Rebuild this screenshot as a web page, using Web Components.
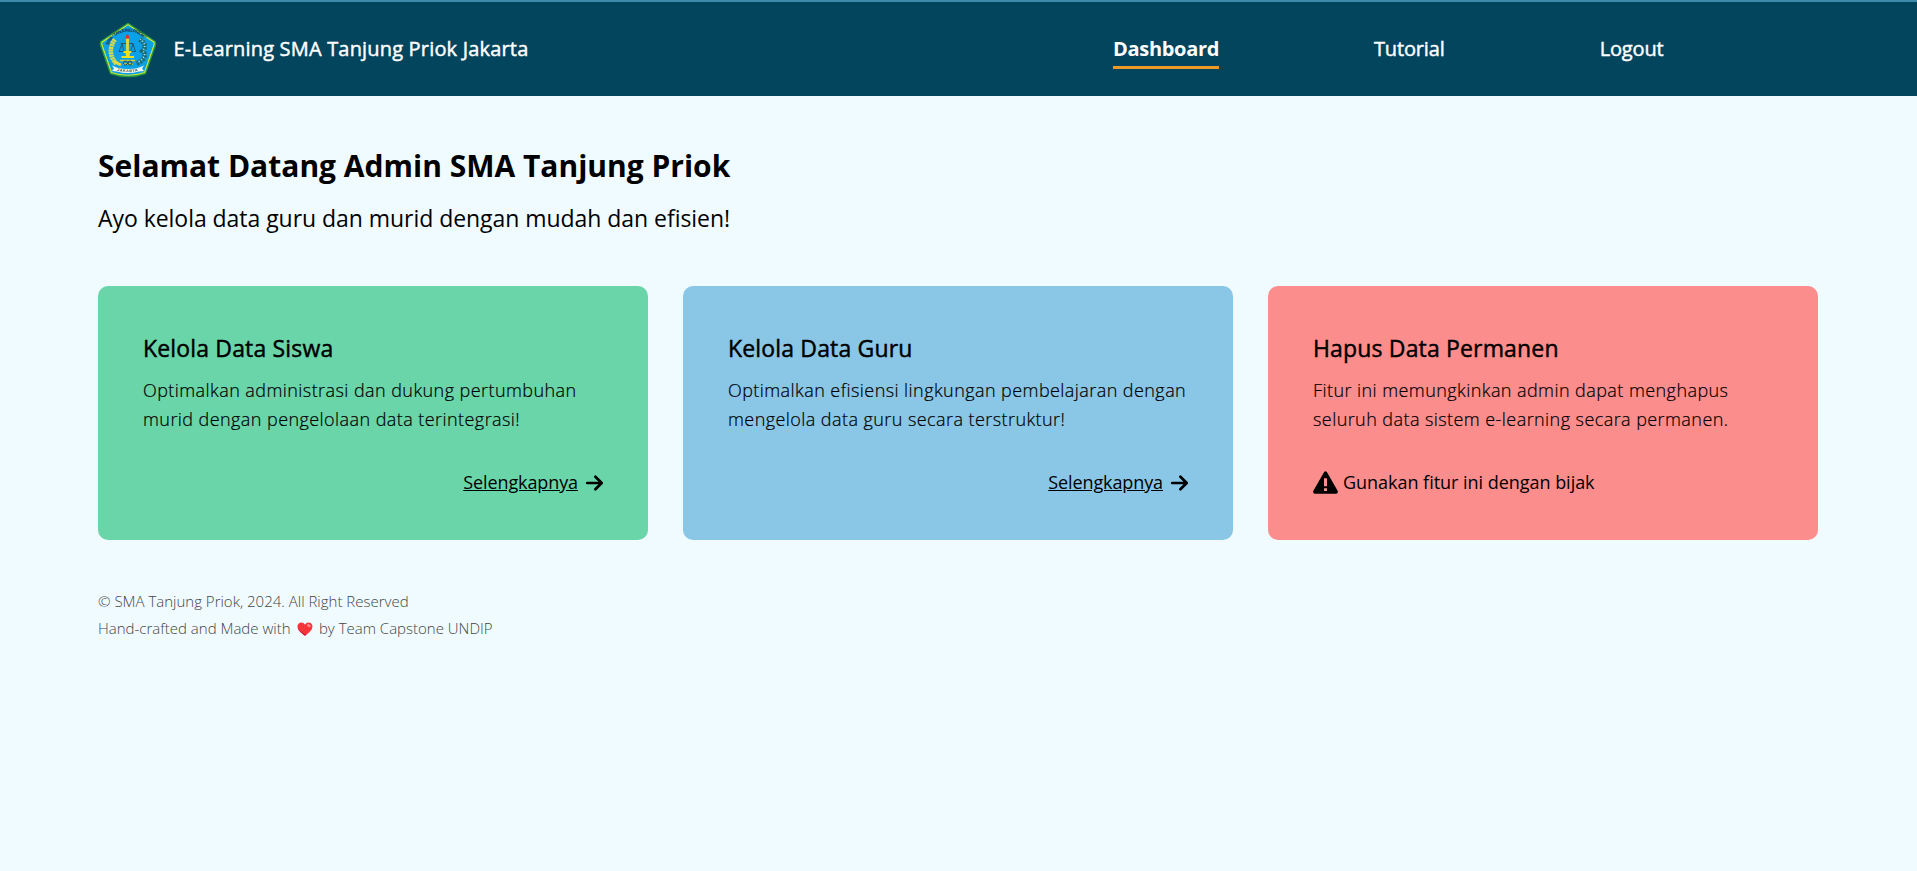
<!DOCTYPE html>
<html lang="id">
<head>
<meta charset="utf-8">
<title>E-Learning SMA Tanjung Priok Jakarta</title>
<style>
  body { margin: 0; min-height: 100vh; background: #f0fbff; color: #000; font-family: "Open Sans", sans-serif; }
</style>
</head>
<body>
<elearning-app></elearning-app>

<script>
const define = (name, html) => {
  const template = document.createElement('template');
  template.innerHTML = html;
  customElements.define(name, class extends HTMLElement {
    constructor() {
      super();
      this.attachShadow({ mode: 'open' }).append(template.content.cloneNode(true));
    }
  });
};

define('school-crest', `
  <style>
    :host { display: block; width: 60px; height: 60px; }
    svg { display: block; width: 100%; height: 100%; }
    text { font-family: "Liberation Sans", sans-serif; font-weight: 700; }
  </style>
  <svg viewBox="0 0 60 60">
    <path d="M30 3.3 57 21.5Q58 23 57.3 25.5L47.5 53.5Q39 56.5 30 56.5T12.500 53.5L2.700 25.500Q2 23 3 21.500Z" fill="#0ca0e6" stroke="#25983c" stroke-width="1.400"/>
    <path d="M30 4.600 56 22.200Q56.500 23.500 56 25L46.500 52.500Q38.500 55.300 30 55.300T13.500 52.500L4 25Q3.500 23.500 4 22.200Z" fill="none" stroke="#d3e827" stroke-width="1.100"/>
    <path id="arc" d="M10.500 25.500C18 7 42 7 50.500 25.500" fill="none"/>
    <text font-size="4.700" fill="#12364f" textLength="44"><textPath href="#arc" textLength="44">SMA "TANJUNG PRIOK"</textPath></text>
    <path d="M17 19.500C11 27 11.500 37 18.500 43.500" fill="none" stroke="#d5d94a" stroke-width="4.600" stroke-dasharray="2.200 .5"/>
    <path d="M16 41.500 23 45" stroke="#e2d93e" stroke-width="3"/>
    <path d="M41.500 19.500C49 24 47 28 44.500 31 50 35 44 42 38.500 43.500" fill="none" stroke="#1c6a70" stroke-width="4.800" stroke-dasharray="2.200 1"/>
    <path d="M42 19C49.500 24 46 29 45 31 49.500 35 43 41 39 42.500" fill="none" stroke="#b9dccb" stroke-width="1.300" stroke-dasharray="1.200 1.700"/>
    <path d="M22.500 23.500H35.500M24 24 21 31.500H26ZM35 24 32.500 31.500H37.500Z" fill="none" stroke="#1d5268" stroke-width=".9"/>
    <path d="M28 18.500H31L30.800 31H28.200Z" fill="#ead63a"/>
    <path d="M25.500 31H33.500V33H32L31.500 36H36V38H23.500V36H28L27.500 33H25.500Z" fill="#efe01c"/>
    <path d="M22 40.500H37M25 44H35" stroke="#d5ce37" stroke-width="1.700"/>
    <circle cx="27.500" cy="43" r="2" fill="none" stroke="#244e55"/>
    <circle cx="32" cy="43" r="2" fill="none" stroke="#244e55"/>
    <path d="M29.500 14Q32 16.500 30.800 18.500H28.200Q27 16.500 29.500 14Z" fill="#e52d35"/>
    <path d="M14 45.500 18.500 47.500Q30 50.500 41.500 47.500L46 45.500 44 48.500 46 51 41 51.500Q30 54.500 19 51.500L14 51 16 48.500Z" fill="#f4f8f2"/>
    <path id="rib" d="M19 50.800Q30 53.500 41 50.800" fill="none"/>
    <text font-size="3.800" fill="#31444b"><textPath href="#rib" textLength="21">JAKARTA</textPath></text>
  </svg>`);

define('nav-link', `
  <style>
    :host { display: block; font-size: 20px; line-height: 30px; letter-spacing: -.15px; -webkit-text-stroke: .45px; border-bottom: 3px solid transparent; padding-bottom: 2px; }
    :host([active]) { font-weight: 700; letter-spacing: -.32px; -webkit-text-stroke: 0; border-color: #ee9928; }
  </style><slot></slot>`);

define('site-header', `
  <style>
    :host { display: flex; box-sizing: border-box; height: 96px; padding: 0 253.500px 0 98px; align-items: center; background: #03455d; border-top: 2px solid #3d8bab; color: #fff; }
    school-crest { margin-top: 2px; }
    .name { margin-left: 15.500px; font-size: 20px; line-height: 30px; letter-spacing: .18px; -webkit-text-stroke: .45px; }
    nav { display: flex; gap: 155px; margin-left: auto; padding-top: 4px; }
  </style>
  <school-crest></school-crest>
  <div class="name">E-Learning SMA Tanjung Priok Jakarta</div>
  <nav><slot></slot></nav>`);

define('welcome-banner', `
  <style>
    :host { display: block; }
    h1 { margin: 0; font-size: 30px; line-height: 45px; font-weight: 700; }
    p { margin: 12px 0 0; font-size: 23px; line-height: 36px; letter-spacing: -.045px; }
  </style>
  <h1><slot name="title"></slot></h1>
  <p><slot></slot></p>`);

define('menu-card', `
  <style>
    :host { display: flex; flex-direction: column; box-sizing: border-box; height: 254px; padding: 44px 45px; border-radius: 10px; background: var(--card); }
    h2 { margin: 0; font-size: 23px; line-height: 36px; font-weight: 400; letter-spacing: .16px; -webkit-text-stroke: .45px; }
    p { margin: 10px 0 0; font-size: 18px; line-height: 29px; font-weight: 300; letter-spacing: .43px; -webkit-text-stroke: .2px; white-space: nowrap; }
    footer { display: flex; margin-top: 34px; }
  </style>
  <h2><slot name="title"></slot></h2>
  <p><slot></slot></p>
  <footer><slot name="action"></slot></footer>`);

define('more-link', `
  <style>
    :host { display: flex; align-items: center; margin-left: auto; font-size: 18px; line-height: 29px; letter-spacing: -.1px; }
    span { text-decoration: underline; }
    svg { width: 18px; height: 20px; margin-left: 7px; }
  </style>
  <span><slot></slot></span>
  <svg viewBox="0 0 18 20"><path d="M2.200 10H16.200M10.400 3.700 16.700 10 10.400 16.300" fill="none" stroke="#000" stroke-width="2.700" stroke-linecap="round" stroke-linejoin="round"/></svg>`);

define('warning-note', `
  <style>
    :host { display: flex; align-items: center; font-size: 18px; line-height: 29px; letter-spacing: -.03px; }
    svg { width: 25px; height: 23px; margin-right: 5px; }
  </style>
  <svg viewBox="0 0 25 23"><path fill-rule="evenodd" d="M11 1.200Q12.500-.8 14 1.200L24.600 19.800Q25.500 22.500 23 22.700H2Q-.5 22.500 .4 19.800ZM11 7.300V15.300H14V7.300ZM11 17.300V20H14V17.300Z"/></svg>
  <slot></slot>`);

define('site-footer', `
  <style>
    :host { display: block; font-size: 15px; line-height: 27px; font-weight: 300; color: #444; }
    div { display: flex; align-items: center; white-space: pre; }
    svg { width: 16px; height: 14px; margin: 1px 6.400px 0 6px; }
  </style>
  <div>© SMA Tanjung Priok, 2024. All Right Reserved</div>
  <div><span>Hand-crafted and Made with</span><svg viewBox="0 0 16 14"><path d="M8 13.700C4 11 .5 8 .5 4.300.5.300 6-1 8 2.700 10-1 15.500.3 15.500 4.300 15.500 8 12 11 8 13.700Z" fill="#fa3438"/><path d="M.6 5C1 8.500 4.500 11.300 8 13.700L9.200 12.800C5 11 1.500 8 .6 5Z" fill="#c41447"/><ellipse cx="11.800" cy="3.700" rx="2" ry="1.300" fill="#ff8b8b" transform="rotate(30 11.800 3.700)"/></svg><span>by Team Capstone UNDIP</span></div>`);

define('elearning-app', `
  <style>
    :host { display: block; }
    main { padding: 47px 99px 0 98px; }
    .cards { display: grid; grid-template-columns: repeat(3, 1fr); gap: 35px; margin-top: 50px; }
    site-footer { margin-top: 48px; }
  </style>
  <site-header>
    <nav-link active>Dashboard</nav-link>
    <nav-link>Tutorial</nav-link>
    <nav-link>Logout</nav-link>
  </site-header>
  <main>
    <welcome-banner><span slot="title">Selamat Datang Admin SMA Tanjung Priok</span>Ayo kelola data guru dan murid dengan mudah dan efisien!</welcome-banner>
    <section class="cards">
      <menu-card style="--card:#6ad5a9"><span slot="title">Kelola Data Siswa</span>Optimalkan administrasi dan dukung pertumbuhan<br>murid dengan pengelolaan data terintegrasi!<more-link slot="action">Selengkapnya</more-link></menu-card>
      <menu-card style="--card:#8ac6e6"><span slot="title">Kelola Data Guru</span>Optimalkan efisiensi lingkungan pembelajaran dengan<br>mengelola data guru secara terstruktur!<more-link slot="action">Selengkapnya</more-link></menu-card>
      <menu-card style="--card:#fc8d8d"><span slot="title">Hapus Data Permanen</span>Fitur ini memungkinkan admin dapat menghapus<br>seluruh data sistem e-learning secara permanen.<warning-note slot="action">Gunakan fitur ini dengan bijak</warning-note></menu-card>
    </section>
    <site-footer></site-footer>
  </main>`);
</script>
</body>
</html>
